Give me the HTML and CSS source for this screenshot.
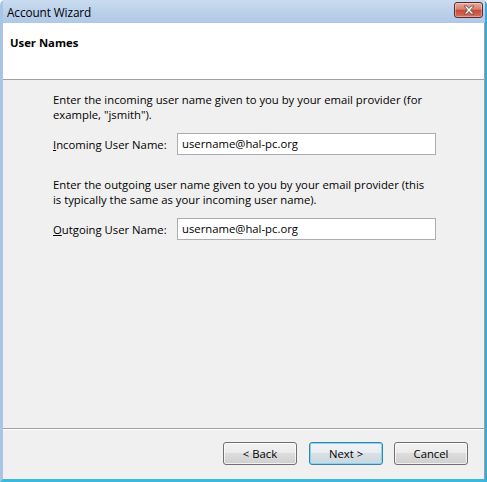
FILE: index.html
```html
<!DOCTYPE html>
<html>
<head>
<meta charset="utf-8">
<link rel="stylesheet" href="styles.css">
</head>
<body>
<div class="window">
  <div class="titlebar">
    <span class="title">Account Wizard</span>
    <button class="close" aria-label="Close">
      <svg width="14" height="10" viewBox="0 0 14 10">
        <path d="M2 1 L5 1 L7 3.5 L9 1 L12 1 L8.5 5 L12 9 L9 9 L7 6.5 L5 9 L2 9 L5.5 5 Z" fill="#ffffff" stroke="#5a4a4a" stroke-width="0.8" stroke-linejoin="round"/>
      </svg>
    </button>
  </div>
  <div class="client">
    <div class="header">
      <div class="heading">User Names</div>
    </div>
    <div class="content">
      <p class="desc">Enter the incoming user name given to you by your email provider (for example, "jsmith").</p>
      <div class="row">
        <label class="label"><u>I</u>ncoming User Name:</label>
        <div class="field">username@hal-pc.org</div>
      </div>
      <p class="desc second">Enter the outgoing user name given to you by your email provider (this is typically the same as your incoming user name).</p>
      <div class="row">
        <label class="label"><u>O</u>utgoing User Name:</label>
        <div class="field">username@hal-pc.org</div>
      </div>
    </div>
    <div class="footer">
      <button class="btn">&lt; Back</button>
      <button class="btn default">Next &gt;</button>
      <button class="btn cancel">Cancel</button>
    </div>
  </div>
</div>
</body>
</html>
```
FILE: styles.css
```css
html, body {
  margin: 0;
  padding: 0;
  background: #ffffff;
}
body {
  font-family: "Open Sans", "Noto Sans", sans-serif;
  font-size: 11.3px;
  color: #000;
}
.window {
  width: 487px;
  height: 482px;
  box-sizing: border-box;
  display: flex;
  flex-direction: column;
  background: #b4cbe6;
  border-left: 3px solid #a9c4e4;
  border-right: 2px solid #3aa6dc;
  border-bottom: 3px solid #3ab8e0;
  border-top-left-radius: 5px;
  border-top-right-radius: 5px;
  box-shadow: inset 1px 0 0 #6c94c6;
}
.titlebar {
  height: 23px;
  flex: none;
  display: flex;
  align-items: center;
  justify-content: space-between;
  background: linear-gradient(#c9dbef, #aec8e6);
  padding: 0 2px 0 4px;
}
.title {
  font-size: 11.8px;
  color: #000;
  letter-spacing: -0.1px;
  margin-top: 1px;
}
.close {
  width: 29px;
  height: 16px;
  margin-top: -3px;
  padding: 0;
  border: 1px solid #5e2a2a;
  border-radius: 3px;
  background: linear-gradient(#e8a99a 0%, #d88070 45%, #c44a34 50%, #d6705c 100%);
  display: flex;
  align-items: center;
  justify-content: center;
  box-shadow: inset 0 0 0 1px rgba(255,255,255,0.35);
}
.client {
  flex: 1;
  display: flex;
  flex-direction: column;
  background: #f0f0f0;
  border-right: 1px solid #a0a0a0;
}
.header {
  height: 57px;
  flex: none;
  background: #ffffff;
  border-bottom: 1px solid #a0a0a0;
  box-sizing: border-box;
  padding: 12px 0 0 7px;
}
.heading {
  font-weight: bold;
  font-size: 11.3px;
  line-height: 16px;
}
.content {
  flex: 1;
  padding: 12px 0 0 50px;
  border-bottom: 1px solid #a0a0a0;
}
.desc {
  margin: 0;
  width: 376px;
  line-height: 15px;
}
.desc.second {
  margin-top: 22px;
}
.row {
  margin-top: 11px;
  display: flex;
  align-items: center;
}
.label {
  width: 124px;
}
.field {
  width: 259px;
  height: 22px;
  box-sizing: border-box;
  border: 1px solid #abadb3;
  background: #ffffff;
  padding: 0 0 0 4px;
  line-height: 20px;
}
.footer {
  height: 50px;
  flex: none;
  box-sizing: border-box;
  display: flex;
  justify-content: flex-end;
  padding: 12px 16px 0 0;
  gap: 12px;
  border-top: 1px solid #ffffff;
}
.btn {
  width: 74px;
  height: 23px;
  font-family: "Open Sans", "Noto Sans", sans-serif;
  font-size: 11.3px;
  color: #000;
  padding: 0;
  border: 1px solid #707070;
  border-radius: 3px;
  background: linear-gradient(#f2f2f2 0%, #ebebeb 49%, #dddddd 50%, #cfcfcf 100%);
  box-shadow: inset 0 0 0 1px rgba(255,255,255,0.7);
}
.btn.default {
  border-color: #3c7fb1;
  box-shadow: inset 0 0 0 1px #7fd6f5;
  background: linear-gradient(#f0f4f7 0%, #e8edf1 49%, #d9e0e6 50%, #cdd6dd 100%);
}
.btn.cancel {
  margin-left: -1px;
}
```
